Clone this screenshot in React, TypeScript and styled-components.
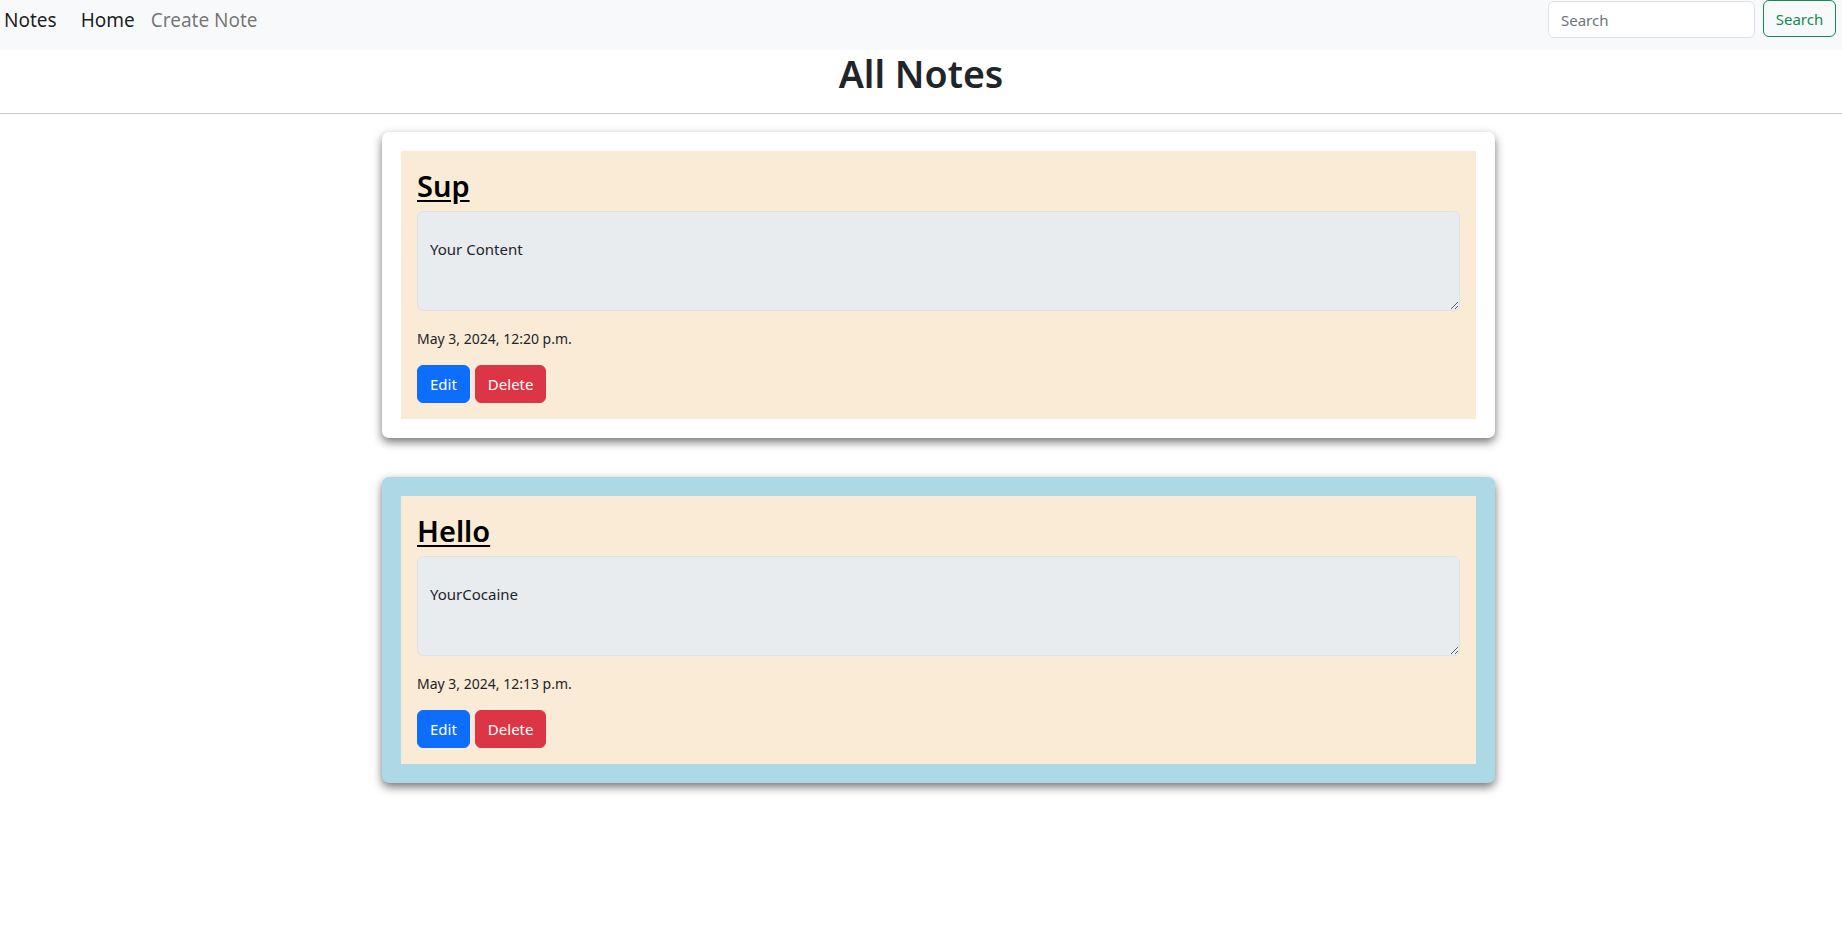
import React from "react";
import styled, { createGlobalStyle } from "styled-components";

const GlobalStyle = createGlobalStyle`
  * {
    box-sizing: border-box;
  }

  body {
    margin: 0;
    background: #fff;
    color: #212529;
    font-family: "Noto Sans", "Open Sans", sans-serif;
    font-size: 16px;
    line-height: 1.5;
  }
`;

type Note = {
  id: number;
  title: string;
  content: string;
  created: string;
  tint: string;
};

const notes: Note[] = [
  {
    id: 1,
    title: "Sup",
    content: "Your Content",
    created: "May 3, 2024, 12:20 p.m.",
    tint: "#ffffff",
  },
  {
    id: 2,
    title: "Hello",
    content: "YourCocaine",
    created: "May 3, 2024, 12:13 p.m.",
    tint: "#add8e6",
  },
];

const App: React.FC = () => {
  return (
    <>
      <GlobalStyle />
      <Navbar>
        <Brand href="#">Notes</Brand>
        <NavLinks>
          <NavLink href="#" $active>
            Home
          </NavLink>
          <NavLink href="#">Create Note</NavLink>
        </NavLinks>
        <SearchForm onSubmit={(e) => e.preventDefault()}>
          <SearchInput type="search" placeholder="Search" />
          <SearchButton type="submit">Search</SearchButton>
        </SearchForm>
      </Navbar>

      <PageTitle>All Notes</PageTitle>
      <Divider />

      <NoteList>
        {notes.map((note) => (
          <NoteCard key={note.id} $tint={note.tint}>
            <NoteBody>
              <NoteTitle>
                <a href="#">{note.title}</a>
              </NoteTitle>
              <NoteContent value={note.content} readOnly />
              <NoteDate>{note.created}</NoteDate>
              <Actions>
                <ActionButton $color="#0d6efd">Edit</ActionButton>
                <ActionButton $color="#dc3545">Delete</ActionButton>
              </Actions>
            </NoteBody>
          </NoteCard>
        ))}
      </NoteList>
    </>
  );
};

const Navbar = styled.nav`
  display: flex;
  align-items: flex-start;
  height: 50px;
  padding: 0 6px 0 4px;
  background: #f8f9fa;
`;

const Brand = styled.a`
  margin-right: 16px;
  font-size: 19px;
  line-height: 40px;
  color: rgba(0, 0, 0, 0.9);
  text-decoration: none;
`;

const NavLinks = styled.div`
  display: flex;
`;

const NavLink = styled.a<{ $active?: boolean }>`
  padding: 0 8px;
  font-size: 19px;
  line-height: 40px;
  color: ${(p) => (p.$active ? "rgba(0, 0, 0, 0.9)" : "rgba(0, 0, 0, 0.55)")};
  text-decoration: none;
`;

const SearchForm = styled.form`
  display: flex;
  gap: 8px;
  margin-left: auto;
`;

const SearchInput = styled.input`
  width: 207px;
  height: 37px;
  margin-top: 1px;
  padding: 6px 12px;
  border: 1px solid #dee2e6;
  border-radius: 6px;
  background: #fff;
  font-family: inherit;
  font-size: 15px;
  color: #212529;

  &::placeholder {
    color: #6c757d;
  }
`;

const SearchButton = styled.button`
  width: 73px;
  height: 37px;
  padding: 0;
  border: 1px solid #198754;
  border-radius: 6px;
  background: transparent;
  font-family: inherit;
  font-size: 15px;
  color: #198754;
`;

const PageTitle = styled.h1`
  margin: 0;
  font-size: 37.5px;
  font-weight: 600;
  line-height: 48px;
  text-align: center;
  color: #212529;
`;

const Divider = styled.hr`
  margin: 15px 0 0;
  border: 0;
  border-top: 1px solid #c8c8c8;
`;

const NoteList = styled.main`
  display: flex;
  flex-direction: column;
  align-items: center;
  gap: 39px;
  padding: 18px 0 40px 35px;
`;

const NoteCard = styled.section<{ $tint: string }>`
  width: 1113px;
  padding: 19px;
  border-radius: 7px;
  background: ${(p) => p.$tint};
  box-shadow: 0 4px 10px rgba(0, 0, 0, 0.55);
`;

const NoteBody = styled.div`
  padding: 16px;
  background: #faebd7;
`;

const NoteTitle = styled.h2`
  margin: 0 0 6px;
  font-size: 29px;
  font-weight: 600;
  line-height: 38px;

  a {
    color: #000;
    text-decoration: underline;
    text-underline-offset: 3px;
  }
`;

const NoteContent = styled.textarea`
  display: block;
  width: 100%;
  height: 100px;
  padding: 25px 12px 6px;
  border: 1px solid #dee2e6;
  border-radius: 6px;
  background: #e9ecef;
  font-family: inherit;
  font-size: 15px;
  line-height: 24px;
  color: #212529;
  resize: vertical;
  outline: none;
`;

const NoteDate = styled.p`
  margin: 17px 0 15px;
  font-size: 14px;
  line-height: 22px;
  color: #212529;
`;

const Actions = styled.div`
  display: flex;
  gap: 5px;
`;

const ActionButton = styled.button<{ $color: string }>`
  height: 38px;
  padding: 0 12px;
  border: 1px solid ${(p) => p.$color};
  border-radius: 6px;
  background: ${(p) => p.$color};
  font-family: inherit;
  font-size: 15px;
  color: #fff;
`;

export default App;
